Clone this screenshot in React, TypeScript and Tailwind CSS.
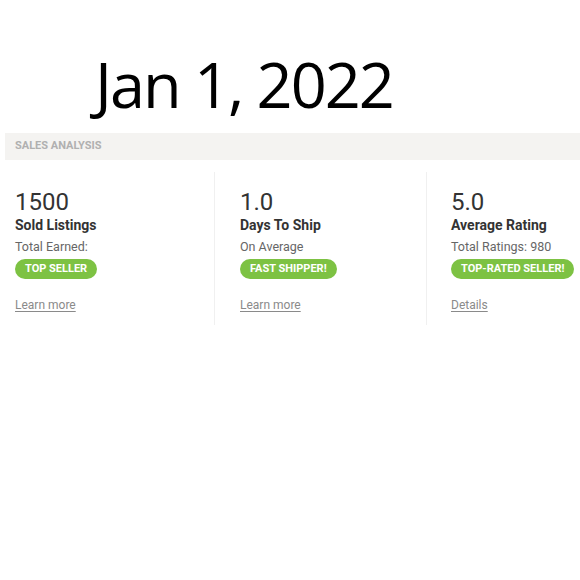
import React from "react";

type Stat = {
  value: string;
  label: string;
  sub: string;
  badge: string;
  link: string;
};

const stats: Stat[] = [
  { value: "1500", label: "Sold Listings", sub: "Total Earned:", badge: "TOP SELLER", link: "Learn more" },
  { value: "1.0", label: "Days To Ship", sub: "On Average", badge: "FAST SHIPPER!", link: "Learn more" },
  { value: "5.0", label: "Average Rating", sub: "Total Ratings: 980", badge: "TOP-RATED SELLER!", link: "Details" },
];

function StatCol({ s, className }: { s: Stat; className: string }) {
  return (
    <div className={className}>
      <div className="text-[24px] leading-[28px] text-[#333333]">{s.value}</div>
      <div className="text-[14px] leading-[18px] font-bold text-[#333333]">{s.label}</div>
      <div className="mt-[5px] text-[12.5px] leading-[16px] text-[#666666]">{s.sub}</div>
      <div className="mt-[4px] flex">
        <span className="rounded-full bg-[#7dc243] px-[10px] text-[11px] leading-[20px] font-bold text-white">
          {s.badge}
        </span>
      </div>
      <div className="mt-[18px] text-[12px] leading-[16px] text-[#8a8a8a] underline underline-offset-2">{s.link}</div>
    </div>
  );
}

export default function App() {
  return (
    <div className="w-[580px] h-[580px] bg-white overflow-hidden" style={{ fontFamily: "Roboto, 'Liberation Sans', sans-serif" }}>
      <div className="pt-[46px] pl-[95px] h-[133px]">
        <div className="text-[63px] leading-[76px] tracking-[-2px] text-black" style={{ fontFamily: "'Open Sans', 'Noto Sans', sans-serif" }}>
          Jan 1, 2022
        </div>
      </div>
      <div className="ml-[5px] h-[27px] bg-[#f4f3f1] flex items-center pl-[10px]">
        <span className="text-[11px] font-bold text-[#b0b0b0]">SALES ANALYSIS</span>
      </div>
      <div className="ml-[5px] mt-[12px] flex">
        <StatCol s={stats[0]} className="w-[210px] pl-[10px] pt-[16px] h-[153px] border-r border-[#f0f0f0]" />
        <StatCol s={stats[1]} className="w-[212px] pl-[25px] pt-[16px] h-[153px] border-r border-[#f0f0f0]" />
        <StatCol s={stats[2]} className="flex-1 pl-[24px] pt-[16px] h-[153px]" />
      </div>
    </div>
  );
}
